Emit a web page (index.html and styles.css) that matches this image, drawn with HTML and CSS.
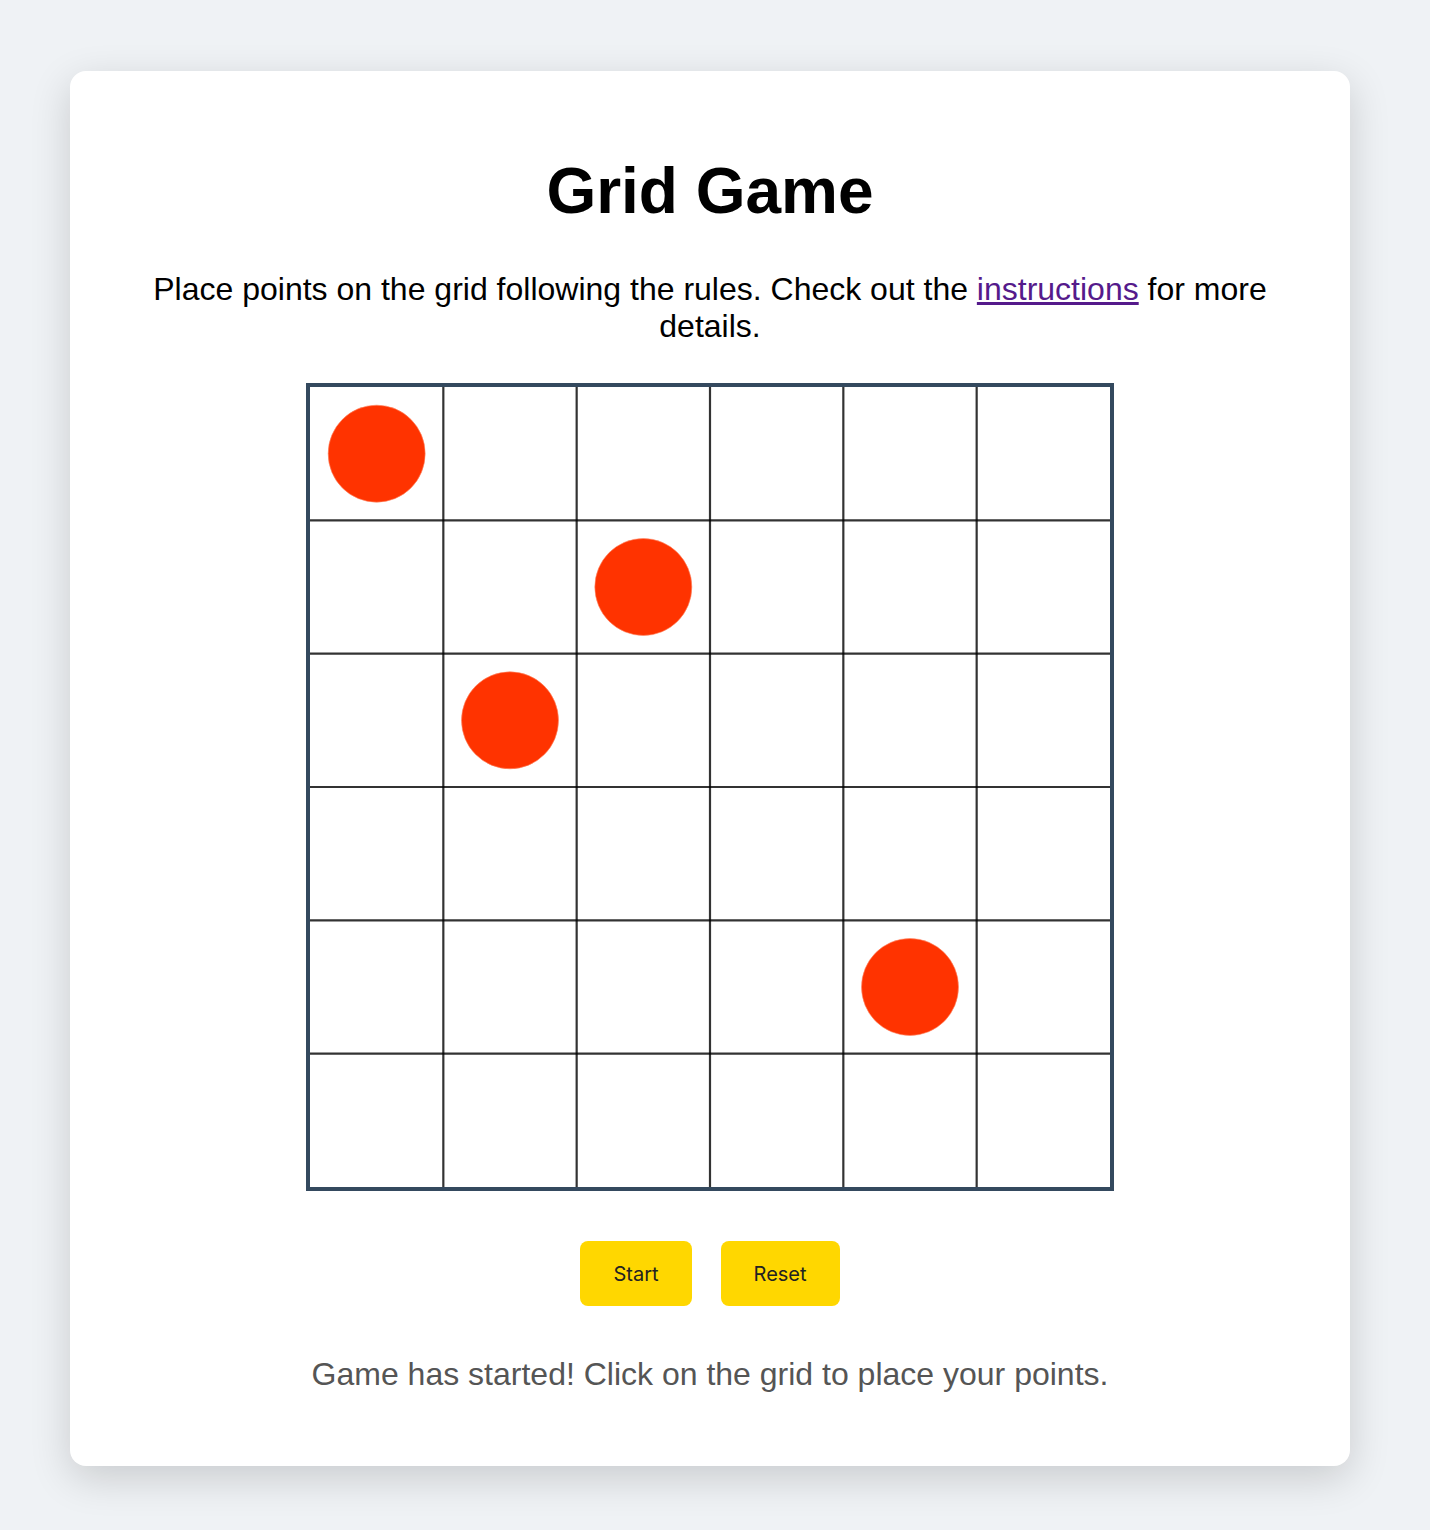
FILE: index.html
```html
<!DOCTYPE html>
<html lang="en">
<head>
<meta charset="utf-8">
<title>Grid Game</title>
<link rel="stylesheet" href="styles.css">
</head>
<body>
<main class="card">
  <h1 class="title">Grid Game</h1>
  <p class="intro">Place points on the grid following the rules. Check out the <a href="#" class="link">instructions</a> for more details.</p>
  <div class="board">
    <svg class="grid" width="800" height="800" viewBox="0 0 800 800">
      <g stroke="#000" stroke-width="2.2" stroke-opacity="0.8">
        <line x1="133.33" y1="0" x2="133.33" y2="800"/>
        <line x1="266.67" y1="0" x2="266.67" y2="800"/>
        <line x1="400" y1="0" x2="400" y2="800"/>
        <line x1="533.33" y1="0" x2="533.33" y2="800"/>
        <line x1="666.67" y1="0" x2="666.67" y2="800"/>
        <line x1="0" y1="133.33" x2="800" y2="133.33"/>
        <line x1="0" y1="266.67" x2="800" y2="266.67"/>
        <line x1="0" y1="400" x2="800" y2="400"/>
        <line x1="0" y1="533.33" x2="800" y2="533.33"/>
        <line x1="0" y1="666.67" x2="800" y2="666.67"/>
      </g>
      <g fill="#ff3300" stroke="#ff8866" stroke-width="1" stroke-opacity="0.6">
        <circle cx="66.67" cy="66.67" r="48.5"/>
        <circle cx="333.33" cy="200" r="48.5"/>
        <circle cx="200" cy="333.33" r="48.5"/>
        <circle cx="600" cy="600" r="48.5"/>
      </g>
    </svg>
  </div>
  <div class="controls">
    <button class="btn">Start</button>
    <button class="btn">Reset</button>
  </div>
  <p class="status">Game has started! Click on the grid to place your points.</p>
</main>
</body>
</html>
```
FILE: styles.css
```css
html, body {
  margin: 0;
  padding: 0;
}
body {
  background: #eff2f5;
  font-family: "Liberation Sans", Arial, sans-serif;
  padding: 71px 80px 60px 70px;
}
.card {
  width: 1280px;
  box-sizing: border-box;
  background: #fff;
  border-radius: 16px;
  box-shadow: 0 12px 40px rgba(0, 0, 0, 0.16);
  padding: 40px 80px 73px;
  text-align: center;
}
.title {
  font-size: 64px;
  font-weight: bold;
  margin: 43px 0 43px;
  color: #000;
}
.intro {
  font-size: 32px;
  line-height: normal;
  margin: 0 0 38px;
  color: #000;
}
.link {
  color: #551a8b;
}
.board {
  display: flex;
  justify-content: center;
}
.grid {
  display: block;
  border: 4px solid #34495e;
  background: #fff;
}
.controls {
  display: flex;
  justify-content: center;
  gap: 29px;
  margin-top: 50px;
}
.btn {
  background: #ffd700;
  border: none;
  border-radius: 8px;
  font-family: Inter, "Noto Sans", sans-serif;
  font-size: 20px;
  color: #222;
  padding: 0 33px;
  height: 65px;
}
.status {
  font-size: 32px;
  color: #555;
  margin: 50px 0 0;
}
```
